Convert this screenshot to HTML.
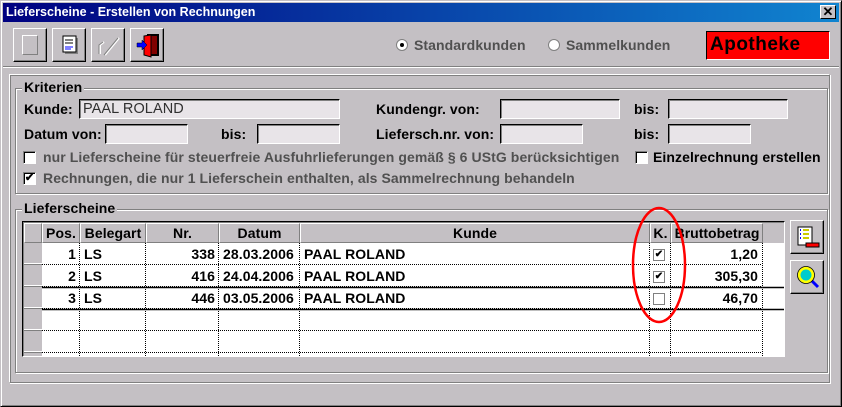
<!DOCTYPE html>
<html><head><meta charset="utf-8"><style>
*{margin:0;padding:0;box-sizing:border-box}
body{width:842px;height:407px;background:#c4c0c4;font-family:"Liberation Sans",Arial,sans-serif;font-size:14px;letter-spacing:0.08px;font-weight:bold;color:#000;position:relative;overflow:hidden}
.a{position:absolute;white-space:nowrap}
.in{position:absolute;background:#e8e4e8;border:1px solid;border-color:#000 #fff #fff #000;box-shadow:inset 1px 1px 0 #808080;height:20px}
.btn{position:absolute;width:34px;height:34px;border:1px solid;border-color:#fff #000 #000 #fff;box-shadow:inset -1px -1px 0 #808080;background:#c4c0c4}
.grp{position:absolute;border:1px solid #808080;box-shadow:1px 1px 0 #fff,inset 1px 1px 0 #fff}
.cb{position:absolute;width:13px;height:13px;background:#fff;border:1px solid;border-color:#808080 #fff #fff #808080;box-shadow:inset 1px 1px 0 #000}
.g{color:#505050}
.hd{position:absolute;top:223px;height:20px;border:1px solid;border-color:#fff #808080 #808080 #fff;text-align:center;line-height:18px}
</style></head><body>
<div class="a" style="left:0;top:0;width:842px;height:407px;border:1px solid;border-color:#c4c0c4 #000 #000 #c4c0c4;box-shadow:inset 1px 1px 0 #fff,inset -1px -1px 0 #808080"></div>
<div class="a" style="left:3px;top:3px;width:836px;height:19px;background:linear-gradient(90deg,#000080,#1084d0)"></div>
<div class="a" style="left:6px;top:4px;color:#fff;font-size:12.5px;letter-spacing:0;line-height:17px">Lieferscheine - Erstellen von Rechnungen</div>
<div class="a" style="left:820px;top:5px;width:16px;height:14px;background:#c4c0c4;border:1px solid;border-color:#fff #000 #000 #fff;text-align:center;line-height:11px;font-size:13px">✕</div>

<div class="btn" style="left:13px;top:28px"><div class="a" style="left:8px;top:6px;width:16px;height:20px;border:1px solid;border-color:#fff #808080 #808080 #fff"></div></div>
<div class="btn" style="left:52px;top:28px"><svg class="a" style="left:7px;top:5px" width="20" height="22"><rect x="5" y="4" width="13" height="16" fill="#808080"/><rect x="3" y="2" width="13" height="16" fill="#fff" stroke="#000"/><path d="M5 6h8M5 9h8" stroke="#000"/><path d="M5 13h8M5 15h6" stroke="#00f"/></svg></div>
<div class="btn" style="left:91px;top:28px"><svg class="a" style="left:5px;top:5px" width="24" height="24"><path d="M3 20v-9l4-3M8 21l14-17" stroke="#fff" stroke-width="2" fill="none"/><path d="M2 20v-9l4-3M7 21l14-17" stroke="#808080" fill="none"/></svg></div>
<div class="btn" style="left:130px;top:28px"><svg class="a" style="left:5px;top:4px" width="24" height="26"><rect x="11" y="1" width="12" height="22" fill="#000"/><rect x="13" y="3" width="8" height="18" fill="#800000"/><path d="M8 3l7-1v22l-7-2z" fill="#f00" stroke="#000"/><path d="M1 10h5v-3l5 5-5 5v-3H1z" fill="#00f" stroke="#000" stroke-width=".5"/></svg></div>

<div class="a" style="left:396px;top:39px;width:12px;height:12px;border-radius:50%;background:#fff;border:1px solid #808080"></div>
<div class="a" style="left:400px;top:43px;width:4px;height:4px;border-radius:50%;background:#000"></div>
<div class="a g" style="left:414px;top:37px">Standardkunden</div>
<div class="a" style="left:548px;top:39px;width:12px;height:12px;border-radius:50%;background:#fff;border:1px solid #808080"></div>
<div class="a g" style="left:566px;top:37px">Sammelkunden</div>
<div class="a" style="left:706px;top:31px;width:124px;height:29px;background:#f00;border:1px solid;border-color:#000 #fff #fff #000;font-size:19px;letter-spacing:0.5px;line-height:26px;padding-left:3px">Apotheke</div>

<div class="a" style="left:3px;top:66px;width:836px;height:2px;border-top:1px solid #808080;border-bottom:1px solid #fff"></div>
<div class="a" style="left:9px;top:74px;width:821px;height:309px;border:1px solid;border-color:#fff #808080 #808080 #fff;box-shadow:1px 1px 0 #fff,inset 1px 1px 0 #808080"></div>

<div class="grp" style="left:15px;top:88px;width:813px;height:106px"></div>
<div class="a" style="left:22px;top:79px;background:#c4c0c4;padding:0 2px">Kriterien</div>
<div class="a" style="left:24px;top:101px">Kunde:</div>
<div class="in" style="left:79px;top:99px;width:261px;font-weight:normal;font-size:14.5px;line-height:18px;padding-left:3px;color:#303030">PAAL ROLAND</div>
<div class="a" style="left:376px;top:101px">Kundengr. von:</div>
<div class="in" style="left:500px;top:99px;width:120px"></div>
<div class="a" style="left:634px;top:101px">bis:</div>
<div class="in" style="left:668px;top:99px;width:120px"></div>
<div class="a" style="left:24px;top:126px">Datum von:</div>
<div class="in" style="left:105px;top:124px;width:83px"></div>
<div class="a" style="left:221px;top:126px">bis:</div>
<div class="in" style="left:257px;top:124px;width:83px"></div>
<div class="a" style="left:376px;top:126px">Liefersch.nr. von:</div>
<div class="in" style="left:500px;top:124px;width:83px"></div>
<div class="a" style="left:634px;top:126px">bis:</div>
<div class="in" style="left:668px;top:124px;width:83px"></div>
<div class="cb" style="left:23px;top:151px"></div>
<div class="a g" style="left:43px;top:149px">nur Lieferscheine für steuerfreie Ausfuhrlieferungen gemäß § 6 UStG berücksichtigen</div>
<div class="cb" style="left:635px;top:151px"></div>
<div class="a" style="left:653px;top:149px">Einzelrechnung erstellen</div>
<div class="cb" style="left:23px;top:172px;font-size:11px;line-height:10px;text-align:center">✔</div>
<div class="a g" style="left:43px;top:170px">Rechnungen, die nur 1 Lieferschein enthalten, als Sammelrechnung behandeln</div>

<div class="grp" style="left:15px;top:209px;width:813px;height:164px"></div>
<div class="a" style="left:22px;top:200px;background:#c4c0c4;padding:0 2px">Lieferscheine</div>

<div class="a" style="left:22px;top:221px;width:763px;height:136px;background:#fff;border:1px solid;border-color:#000 #fff #fff #000;box-shadow:inset 1px 1px 0 #808080"></div>
<div class="a" style="left:24px;top:223px;width:760px;height:20px;background:#c4c0c4"></div>
<div class="hd" style="left:24px;width:18px"></div>
<div class="hd" style="left:42px;width:38px">Pos.</div>
<div class="hd" style="left:80px;width:66px">Belegart</div>
<div class="hd" style="left:146px;width:73px">Nr.</div>
<div class="hd" style="left:219px;width:81px">Datum</div>
<div class="hd" style="left:300px;width:350px">Kunde</div>
<div class="hd" style="left:650px;width:21px">K.</div>
<div class="hd" style="left:671px;width:92px;letter-spacing:0">Bruttobetrag</div>
<div class="a" style="left:24px;top:243px;width:18px;height:113px;background:repeating-linear-gradient(#c4c0c4 0 20px,#fff 20px 21px,#808080 21px 22px)"></div>
<svg class="a" style="left:42px;top:243px" width="742" height="114">
<g stroke="#000" stroke-dasharray="1 1"><path d="M0 21.5h720M0 43.5h720M0 65.5h720M0 87.5h720M0 109.5h720"/><path d="M37.5 0v114M103.5 0v114M176.5 0v114M257.5 0v114M607.5 0v114M628.5 0v114M720.5 0v114"/></g>
<path d="M0 44.5h742M0 66.5h742" stroke="#000" stroke-width="1.5"/>
</svg>
<div class="a" style="left:42px;top:246px;width:34px;text-align:right">1</div><div class="a" style="left:84px;top:246px">LS</div><div class="a" style="left:150px;top:246px;width:65px;text-align:right">338</div><div class="a" style="left:223px;top:246px">28.03.2006</div><div class="a" style="left:304px;top:246px">PAAL ROLAND</div><div class="a" style="left:671px;top:246px;width:87px;text-align:right">1,20</div>
<div class="a" style="left:42px;top:268px;width:34px;text-align:right">2</div><div class="a" style="left:84px;top:268px">LS</div><div class="a" style="left:150px;top:268px;width:65px;text-align:right">416</div><div class="a" style="left:223px;top:268px">24.04.2006</div><div class="a" style="left:304px;top:268px">PAAL ROLAND</div><div class="a" style="left:671px;top:268px;width:87px;text-align:right">305,30</div>
<div class="a" style="left:42px;top:290px;width:34px;text-align:right">3</div><div class="a" style="left:84px;top:290px">LS</div><div class="a" style="left:150px;top:290px;width:65px;text-align:right">446</div><div class="a" style="left:223px;top:290px">03.05.2006</div><div class="a" style="left:304px;top:290px">PAAL ROLAND</div><div class="a" style="left:671px;top:290px;width:87px;text-align:right">46,70</div>
<div class="a" style="left:653px;top:249px;width:12px;height:12px;border:1px solid #808080;font-size:10px;line-height:10px;text-align:center">✔</div>
<div class="a" style="left:653px;top:271px;width:12px;height:12px;border:1px solid #808080;font-size:10px;line-height:10px;text-align:center">✔</div>
<div class="a" style="left:653px;top:293px;width:12px;height:12px;border:1px solid #808080"></div>
<svg class="a" style="left:0;top:0" width="842" height="407"><ellipse cx="659" cy="265" rx="26" ry="57" fill="none" stroke="#f00" stroke-width="2.5"/></svg>

<div class="btn" style="left:790px;top:220px"><svg class="a" style="left:5px;top:5px" width="26" height="24"><rect x="2" y="1" width="14" height="18" fill="#fff" stroke="#000"/><path d="M4 4h1M4 8h1M4 12h1" stroke="#00f" stroke-width="2"/><path d="M7 4h6M7 8h6M7 12h6" stroke="#cc0" stroke-width="2"/><rect x="10" y="17" width="13" height="4" fill="#f00" stroke="#000"/></svg></div>
<div class="btn" style="left:790px;top:260px"><svg class="a" style="left:5px;top:4px" width="26" height="26"><path d="M14 14l8 8" stroke="#00f" stroke-width="3"/><circle cx="10" cy="10" r="7" fill="#0cc" stroke="#ff0" stroke-width="3"/><circle cx="10" cy="10" r="8.5" fill="none" stroke="#000" stroke-width=".8"/></svg></div>
</body></html>
